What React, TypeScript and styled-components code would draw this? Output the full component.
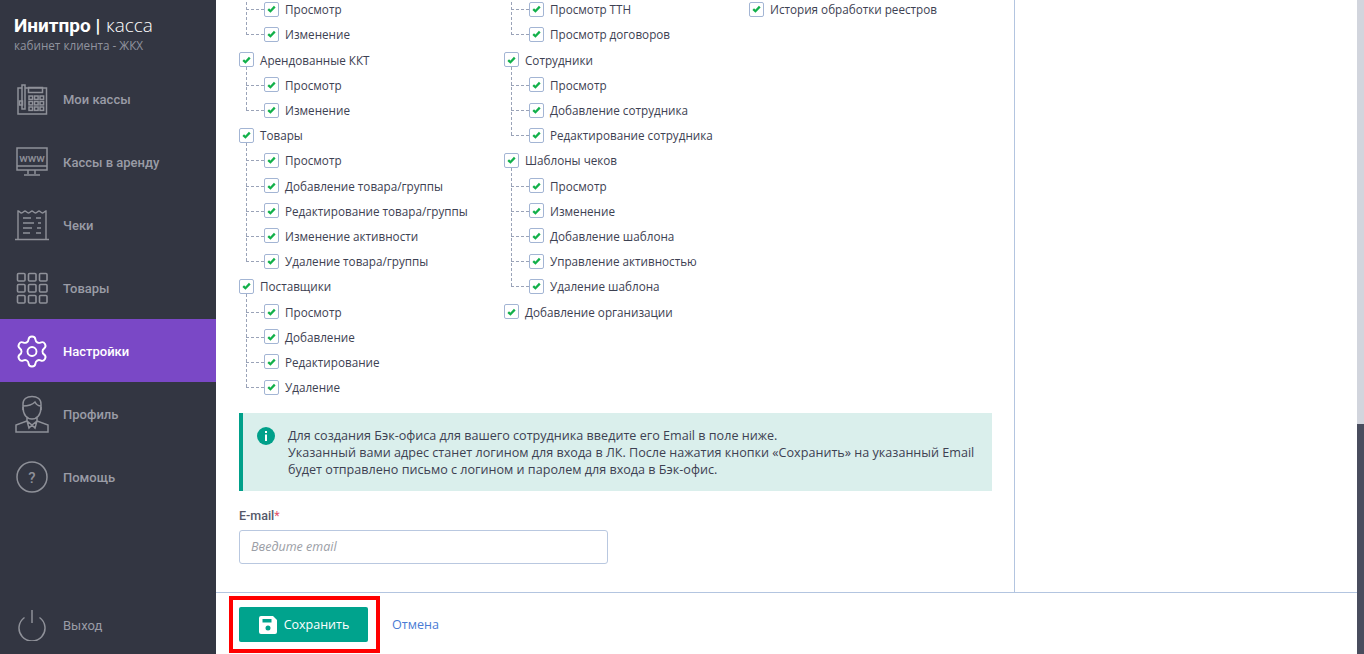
import React from 'react';
import styled, { createGlobalStyle } from 'styled-components';
import { Settings } from 'lucide-react';

const GlobalStyle = createGlobalStyle`
  html, body {
    margin: 0;
    padding: 0;
    height: 100%;
    overflow: hidden;
    background: #fff;
  }
  #root {
    height: 100%;
  }
`;

const Layout = styled.div`
  display: flex;
  width: 1364px;
  height: 654px;
  overflow: hidden;
  font-family: 'Open Sans', 'Liberation Sans', sans-serif;
  font-size: 11.7px;
  color: #3d4152;
`;

const Sidebar = styled.aside`
  display: flex;
  flex-direction: column;
  flex: 0 0 216px;
  background: #333642;
`;

const Brand = styled.div`
  height: 67px;
  padding: 13px 0 0 14px;
  box-sizing: border-box;
`;

const BrandTitle = styled.div`
  font-family: 'Open Sans', sans-serif;
  font-size: 19px;
  line-height: 24px;
  color: #fff;
  white-space: nowrap;
  b {
    font-family: Roboto, sans-serif;
    font-weight: 700;
  }
  span {
    margin-left: 1px;
    font-weight: 300;
  }
`;

const BrandSub = styled.div`
  margin-top: -1px;
  font-size: 11.7px;
  line-height: 16px;
  color: #90939e;
`;

const Nav = styled.nav`
  display: flex;
  flex-direction: column;
  flex: 1;
`;

const NavItem = styled.a<{ $active?: boolean }>`
  display: flex;
  align-items: center;
  height: 63px;
  flex: 0 0 63px;
  padding: 1px 0 0 14px;
  box-sizing: border-box;
  font-family: Roboto, sans-serif;
  font-weight: 500;
  font-size: 13px;
  background: ${p => (p.$active ? '#7a48c6' : 'transparent')};
  color: ${p => (p.$active ? '#fff' : '#9a9ca6')};
`;

const Logout = styled(NavItem)`
  margin-top: auto;
  margin-bottom: -2px;
  font-weight: 400;
`;

const NavIcon = styled.span`
  display: flex;
  align-items: center;
  justify-content: center;
  width: 36px;
  height: 36px;
  margin-right: 13px;
`;

const Main = styled.div`
  display: flex;
  flex-direction: column;
  flex: 1;
  min-width: 0;
`;

const Body = styled.div`
  display: flex;
  flex: 1;
  min-height: 0;
`;

const Panel = styled.div`
  flex: 0 0 799px;
  box-sizing: border-box;
  padding: 0 22px 0 23px;
  border-right: 1px solid #b3c5e0;
  overflow: hidden;
`;

const Columns = styled.div`
  display: grid;
  grid-template-columns: 265px 220px 1fr;
  margin-top: -3.3px;
`;

const Group = styled.div`
  position: relative;
`;

const Row = styled.div<{ $child?: boolean; $linked?: boolean }>`
  position: relative;
  display: flex;
  align-items: center;
  height: 25.2px;
  padding-left: ${p => (p.$child ? '25px' : '0')};
  white-space: nowrap;
  ${p =>
    p.$linked
      ? `&::before {
    content: '';
    position: absolute;
    left: 7px;
    width: 18px;
    top: 50%;
    border-top: 1px dashed #9aa3b8;
  }`
      : ''}
`;

/* vertical dashed line running from the parent box to the last child */
const Stem = styled.div<{ $rows: number; $cropped?: boolean }>`
  position: absolute;
  left: 7px;
  top: ${p => (p.$cropped ? '-20px' : '20px')};
  height: ${p => (p.$cropped ? 20 + (p.$rows - 0.5) * 25.2 : (p.$rows + 0.5) * 25.2 - 20)}px;
  border-left: 1px dashed #9aa3b8;
`;

const Box = styled.span`
  position: relative;
  display: flex;
  align-items: center;
  justify-content: center;
  width: 15px;
  height: 15px;
  margin-right: 6px;
  box-sizing: border-box;
  border: 1px solid #a3b5d4;
  border-radius: 2px;
  background: #fff;
  flex: none;
`;

const Notice = styled.div`
  display: flex;
  height: 78px;
  margin-top: 13.1px;
  box-sizing: border-box;
  padding: 14px 10px 0 14px;
  border-left: 4px solid #00a08a;
  background: #daefec;
  font-size: 12.6px;
  line-height: 17px;
  white-space: nowrap;
`;

const NoticeIcon = styled.span`
  flex: 0 0 18px;
  height: 18px;
  margin-right: 13px;
`;

const Label = styled.div`
  margin-top: 16px;
  line-height: 18px;
  font-family: Roboto, sans-serif;
  font-weight: 500;
  font-size: 12.5px;
  color: #555869;
  em {
    color: #e2526b;
    font-style: normal;
    font-weight: 400;
  }
`;

const Input = styled.input`
  display: block;
  width: 369px;
  height: 34px;
  margin-top: 5px;
  padding: 0 11px;
  box-sizing: border-box;
  border: 1px solid #b9c8e0;
  border-radius: 3px;
  outline: none;
  font-family: 'Open Sans', sans-serif;
  font-style: italic;
  font-size: 12.5px;
  &::placeholder {
    color: #9b9ea6;
    opacity: 1;
  }
`;

const Footer = styled.footer`
  position: relative;
  display: flex;
  align-items: flex-start;
  flex: 0 0 62px;
  box-sizing: border-box;
  padding: 14px 0 0 23px;
  border-top: 1px solid #b3c5e0;
`;

const SaveButton = styled.button`
  display: flex;
  align-items: center;
  justify-content: center;
  gap: 7px;
  width: 129px;
  height: 35px;
  padding: 0 0 0 1px;
  border: 0;
  border-radius: 2px;
  background: #00a38d;
  color: #fff;
  font-family: 'Open Sans', sans-serif;
  font-size: 12.5px;
`;

const CancelLink = styled.a`
  margin-left: 24px;
  line-height: 35px;
  font-size: 12.6px;
  color: #4a7bd4;
`;

/* red annotation frame drawn on top of the screenshot */
const Highlight = styled.div`
  position: absolute;
  left: 13px;
  top: 3px;
  width: 151px;
  height: 57px;
  box-sizing: border-box;
  border: 4px solid #ff0000;
  pointer-events: none;
`;

const ScrollTrack = styled.div`
  display: flex;
  flex-direction: column;
  flex: 0 0 7px;
  padding-top: 424px;
  box-sizing: border-box;
  background: #d2d5dd;
`;

const ScrollThumb = styled.div`
  flex: 1;
  background: #494d5e;
`;

const Check = () => (
  <Box>
    <svg width="9" height="8" viewBox="0 0 11 9">
      <path d="M1.5 4.6 L4.2 7.2 L9.5 1.6" fill="none" stroke="#12b04a" strokeWidth="2.8" />
    </svg>
  </Box>
);

const iconStroke = '#8f9199';

const PhoneIcon = () => (
  <svg width="32" height="32" viewBox="0 0 32 32" fill="none" stroke={iconStroke} strokeWidth="1.5">
    <path d="M2 5h4V2h3v3h21.5v26H2zM9 5v21H6V5" />
    <rect x="12.5" y="4.5" width="14" height="5" />
    <rect x="3.5" y="18" width="3" height="4" />
    {[0, 1, 2].map(r =>
      [0, 1, 2].map(c => <rect key={`${r}${c}`} x={13 + c * 5.5} y={13 + r * 5.5} width="3.6" height="3.4" />)
    )}
  </svg>
);

const WebIcon = () => (
  <svg width="32" height="30" viewBox="0 0 32 30" fill="none" stroke={iconStroke} strokeWidth="1.5">
    <rect x="1" y="1" width="30" height="22" />
    <path d="M1 19h30M12 23v4M19 23v4M8 28h16" />
    <text x="16" y="14.500" textAnchor="middle" fontFamily="Roboto, sans-serif" fontSize="11.5" fill={iconStroke} stroke="none">
      www
    </text>
  </svg>
);

const ReceiptIcon = () => (
  <svg width="36" height="32" viewBox="0 0 36 32" fill="none" stroke={iconStroke} strokeWidth="1.4">
    <path d="M4 30V2c1.500 0 2 2 3.500 2S10 2 11 2s2 2 3.500 2S17 2 18 2s2 2 3.500 2S24 2 25 2s2 2 3.500 2S31 2 32 2v28M1 30.500h34" />
    <path d="M9 9h8M22 9h5M9 14h11M24 14h3M9 19h9M23 19h4M9 24h7M22 24h5" />
  </svg>
);

const GridIcon = () => (
  <svg width="32" height="32" viewBox="0 0 32 32" fill="none" stroke={iconStroke} strokeWidth="1.6">
    {[0, 1, 2].map(r =>
      [0, 1, 2].map(c => <rect key={`${r}${c}`} x={1.5 + c * 11} y={1.5 + r * 11} width="7.5" height="7.5" rx="1" />)
    )}
  </svg>
);

const ProfileIcon = () => (
  <svg width="36" height="38" viewBox="0 0 36 38" fill="none" stroke={iconStroke} strokeWidth="1.5">
    <path d="M9 15V9c0-5 4-7.500 9-7.500s9 2.500 9 7.500v6" />
    <path d="M9 11c5 0 9-1 12-4 1 2 3 4 6 4" />
    <path d="M9 12c0 8 4 12 9 12s9-4 9-12" />
    <path d="M13 23v3L2 30v7h32v-7l-11-4v-3" />
    <path d="M13 26l5 4 5-4M18 30l-3 3-2-7M18 30l3 3 2-7" />
  </svg>
);

const HelpIcon = () => (
  <svg width="32" height="32" viewBox="0 0 32 32" fill="none">
    <circle cx="16" cy="16" r="15" stroke={iconStroke} strokeWidth="1.5" />
    <text x="16" y="21.500" textAnchor="middle" fontFamily="Roboto, sans-serif" fontWeight="500" fontSize="15" fill={iconStroke}>
      ?
    </text>
  </svg>
);

const PowerIcon = () => (
  <svg width="30" height="32" viewBox="0 0 30 32" fill="none" stroke={iconStroke} strokeWidth="1.5">
    <path d="M7.500 8.500a13 13 0 1 0 15 0" />
    <path d="M15 1v13" />
  </svg>
);

const SaveIcon = () => (
  <svg width="18" height="18" viewBox="0 0 18 18">
    <path
      fillRule="evenodd"
      fill="#fff"
      d="M2 0h12l4 4v12a2 2 0 0 1-2 2H2a2 2 0 0 1-2-2V2a2 2 0 0 1 2-2zM3.500 3v3.500h9V3zM9 9.500a2.500 2.500 0 1 0 0 5 2.500 2.500 0 0 0 0-5z"
    />
  </svg>
);

const InfoIcon = () => (
  <svg width="18" height="18" viewBox="0 0 18 18">
    <circle cx="9" cy="9" r="9" fill="#00a08a" />
    <rect x="8" y="4" width="2" height="2" fill="#fff" />
    <rect x="8" y="7.500" width="2" height="6.500" fill="#fff" />
  </svg>
);

type TreeGroup = { title?: string; items: string[]; plain?: boolean };

const columns: TreeGroup[][] = [
  [
    { items: ['Просмотр', 'Изменение'] },
    { title: 'Арендованные ККТ', items: ['Просмотр', 'Изменение'] },
    {
      title: 'Товары',
      items: ['Просмотр', 'Добавление товара/группы', 'Редактирование товара/группы', 'Изменение активности', 'Удаление товара/группы'],
    },
    { title: 'Поставщики', items: ['Просмотр', 'Добавление', 'Редактирование', 'Удаление'] },
  ],
  [
    { items: ['Просмотр ТТН', 'Просмотр договоров'] },
    { title: 'Сотрудники', items: ['Просмотр', 'Добавление сотрудника', 'Редактирование сотрудника'] },
    {
      title: 'Шаблоны чеков',
      items: ['Просмотр', 'Изменение', 'Добавление шаблона', 'Управление активностью', 'Удаление шаблона'],
    },
    { title: 'Добавление организации', items: [] },
  ],
  [{ items: ['История обработки реестров'], plain: true }],
];

const navItems = [
  { label: 'Мои кассы', icon: <PhoneIcon /> },
  { label: 'Кассы в аренду', icon: <WebIcon /> },
  { label: 'Чеки', icon: <ReceiptIcon /> },
  { label: 'Товары', icon: <GridIcon /> },
  { label: 'Настройки', icon: <Settings size={37} strokeWidth={1.25} color="#fff" />, active: true },
  { label: 'Профиль', icon: <ProfileIcon /> },
  { label: 'Помощь', icon: <HelpIcon /> },
];

export default function App() {
  return (
    <Layout>
      <GlobalStyle />
      <Sidebar>
        <Brand>
          <BrandTitle>
            <b>Инитпро | </b>
            <span>касса</span>
          </BrandTitle>
          <BrandSub>кабинет клиента - ЖКХ</BrandSub>
        </Brand>
        <Nav>
          {navItems.map(item => (
            <NavItem key={item.label} $active={item.active}>
              <NavIcon>{item.icon}</NavIcon>
              {item.label}
            </NavItem>
          ))}
          <Logout>
            <NavIcon>
              <PowerIcon />
            </NavIcon>
            Выход
          </Logout>
        </Nav>
      </Sidebar>
      <Main>
        <Body>
          <Panel>
            <Columns>
              {columns.map((groups, i) => (
                <div key={i}>
                  {groups.map((group, j) => (
                    <Group key={j}>
                      {group.items.length > 0 && !group.plain && (
                        <Stem $rows={group.items.length} $cropped={!group.title} />
                      )}
                      {group.title && (
                        <Row>
                          <Check />
                          {group.title}
                        </Row>
                      )}
                      {group.items.map((item, k) => (
                        <Row key={k} $child $linked={!group.plain}>
                          <Check />
                          {item}
                        </Row>
                      ))}
                    </Group>
                  ))}
                </div>
              ))}
            </Columns>
            <Notice>
              <NoticeIcon>
                <InfoIcon />
              </NoticeIcon>
              <div>
                Для создания Бэк-офиса для вашего сотрудника введите его Email в поле ниже.
                <br />
                Указанный вами адрес станет логином для входа в ЛК. После нажатия кнопки «Сохранить» на указанный Email
                <br />
                будет отправлено письмо с логином и паролем для входа в Бэк-офис.
              </div>
            </Notice>
            <Label>
              E-mail<em>*</em>
            </Label>
            <Input placeholder="Введите email" />
          </Panel>
        </Body>
        <Footer>
          <SaveButton>
            <SaveIcon />
            Сохранить
          </SaveButton>
          <CancelLink>Отмена</CancelLink>
          <Highlight />
        </Footer>
      </Main>
      <ScrollTrack>
        <ScrollThumb />
      </ScrollTrack>
    </Layout>
  );
}
